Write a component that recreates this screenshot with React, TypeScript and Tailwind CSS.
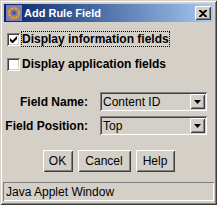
import { ChevronDown } from "lucide-react";

// Win2000 classic bevels
const RAISED =
  "shadow-[inset_1px_1px_#ffffff,inset_-1px_-1px_#404040,inset_2px_2px_#d4d0c8,inset_-2px_-2px_#808080]";
const SUNKEN =
  "shadow-[inset_1px_1px_#808080,inset_-1px_-1px_#ffffff,inset_2px_2px_#404040,inset_-2px_-2px_#d4d0c8]";

function AppIcon() {
  return (
    <svg width="16" height="16" viewBox="0 0 16 16">
      <rect x="0" y="0" width="16" height="16" fill="#7c7cc4" />
      <circle cx="8" cy="8" r="5" fill="none" stroke="#c88a2a" strokeWidth="3" />
      <circle cx="8" cy="8" r="5" fill="none" stroke="#f0c060" strokeWidth="1" strokeDasharray="2 2" />
      <circle cx="8" cy="8" r="2" fill="#5050a0" />
    </svg>
  );
}

function CloseButton() {
  return (
    <div className={`w-[16px] h-[14px] bg-[#d4d0c8] flex items-center justify-center ${RAISED}`}>
      <svg width="8" height="7" viewBox="0 0 8 7">
        <path d="M0 0h2l2 2 2-2h2v1L5 3.5 8 6v1H6L4 5 2 7H0V6l3-2.5L0 1z" fill="#000" />
      </svg>
    </div>
  );
}

function Checkbox({ checked }: { checked: boolean }) {
  return (
    <div className={`w-[13px] h-[13px] bg-white flex items-center justify-center shrink-0 ${SUNKEN}`}>
      {checked && (
        <svg width="7" height="7" viewBox="0 0 7 7">
          <path d="M0 2v3l2 2h1l4-4V0L2.5 4.5z" fill="#000" />
        </svg>
      )}
    </div>
  );
}

function Choice({ value }: { value: string }) {
  return (
    <div className={`w-[107px] h-[19px] bg-[#d4d0c8] flex items-center pl-[3px] pr-[2px] ${SUNKEN}`}>
      <span className="flex-1 text-[12px] text-black leading-none">{value}</span>
      <div className={`w-[15px] h-[15px] bg-[#d4d0c8] flex items-center justify-center ${RAISED}`}>
        <svg width="7" height="4" viewBox="0 0 7 4">
          <path d="M0 0h7L3.5 4z" fill="#000" />
        </svg>
      </div>
    </div>
  );
}

function Button({ label, w }: { label: string; w: string }) {
  return (
    <div className={`${w} h-[22px] bg-[#d4d0c8] flex items-center justify-center text-[12px] text-black ${RAISED}`}>
      {label}
    </div>
  );
}

export default function App() {
  return (
    <div
      className={`w-[217px] h-[205px] bg-[#d4d0c8] p-[4px] flex flex-col font-['Liberation_Sans',Arial,sans-serif] shadow-[inset_1px_1px_#d4d0c8,inset_-1px_-1px_#404040,inset_2px_2px_#ffffff,inset_-2px_-2px_#808080] select-none`}
    >
      <div className="h-[18px] flex items-center bg-linear-to-r from-[#0a246a] to-[#a6caf0] pl-[2px] pr-[2px]">
        <AppIcon />
        <span className="ml-[2px] text-white font-bold text-[11px] flex-1">Add Rule Field</span>
        <CloseButton />
      </div>

      <div className="flex flex-col pt-[9px]">
        <div className="h-[16px] flex items-center pl-[3px]">
          <Checkbox checked />
          <span className="ml-[1px] px-[1px] h-[16px] flex items-center text-[12px] font-bold text-black outline-1 outline-dotted outline-black -outline-offset-1">
            Display information fields
          </span>
        </div>
        <div className="h-[16px] flex items-center pl-[3px] mt-[9px]">
          <Checkbox checked={false} />
          <span className="ml-[1px] px-[1px] text-[12px] font-bold text-black">Display application fields</span>
        </div>

        <div className="flex flex-col gap-[5px] mt-[20px]">
          <div className="flex items-center">
            <span className="w-[84px] text-right text-[12px] font-bold text-black">Field Name:</span>
            <div className="ml-[12px]">
              <Choice value="Content ID" />
            </div>
          </div>
          <div className="flex items-center">
            <span className="w-[84px] text-right text-[12px] font-bold text-black">Field Position:</span>
            <div className="ml-[12px]">
              <Choice value="Top" />
            </div>
          </div>
        </div>

        <div className="flex justify-center gap-[5px] mt-[15px]">
          <Button label="OK" w="w-[30px]" />
          <Button label="Cancel" w="w-[53px]" />
          <Button label="Help" w="w-[39px]" />
        </div>
      </div>

      <div className="mt-auto -mx-px h-[19px] flex items-center pl-[3px] text-[12px] text-black shadow-[inset_1px_1px_#808080,inset_-1px_-1px_#ffffff]">
        Java Applet Window
      </div>
    </div>
  );
}
